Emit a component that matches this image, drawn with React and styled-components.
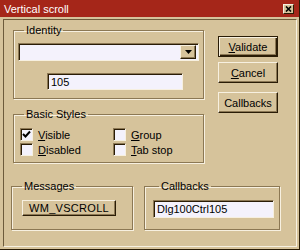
import React from "react";
import styled, { createGlobalStyle } from "styled-components";

const FACE = "#d6c39b";
const LIGHT = "#f7f0e0";
const SHADOW = "#8c7854";
const DARK = "#2a1c06";
const FIELD = "#f4f2fc";

const GlobalStyle = createGlobalStyle`
  html, body {
    margin: 0;
    padding: 0;
    background: ${FACE};
  }
  body {
    font-family: "Liberation Sans", Arial, sans-serif;
    font-size: 11px;
    color: #000;
  }
`;

const Window = styled.div`
  width: 300px;
  height: 250px;
  box-sizing: border-box;
  background: ${FACE};
  display: flex;
  flex-direction: column;
  border-right: 1px solid ${DARK};
  border-bottom: 1px solid ${DARK};
  overflow: hidden;
`;

const TitleBar = styled.div`
  height: 17px;
  flex: none;
  background: #a52619;
  color: #fff;
  display: flex;
  align-items: center;
  justify-content: space-between;
  padding: 0 5px 0 4px;
  font-size: 11px;
`;

const CloseBtn = styled.div`
  width: 11px;
  height: 10px;
  box-sizing: border-box;
  background: ${FACE};
  border: 1px solid;
  border-color: ${LIGHT} ${DARK} ${DARK} ${LIGHT};
  display: flex;
  align-items: center;
  justify-content: center;
`;

const Panel = styled.div`
  flex: 1;
  margin: 2px 2px 2px 3px;
  border: 1px solid;
  border-color: #6d5b3b ${LIGHT} ${LIGHT} #6d5b3b;
  display: flex;
  flex-direction: column;
`;

const TopRow = styled.div`
  display: flex;
  margin: 4px 0 0 9px;
`;

const LeftCol = styled.div`
  width: 191px;
  display: flex;
  flex-direction: column;
  gap: 9px;
`;

const BtnCol = styled.div`
  display: flex;
  flex-direction: column;
  margin: 12px 0 0 14px;
`;

const Group = styled.fieldset`
  margin: 0;
  width: ${(p) => p.$w}px;
  box-sizing: border-box;
  border: 1px solid ${SHADOW};
  box-shadow: inset 1px 1px 0 ${LIGHT}, 1px 1px 0 ${LIGHT};
  padding: ${(p) => p.$pad};
`;

const Legend = styled.legend`
  margin-left: 6px;
  padding: 0 2px;
  line-height: 13px;
  font-size: 11px;
`;

const Button = styled.div`
  width: 60px;
  height: 21px;
  box-sizing: border-box;
  margin-top: ${(p) => p.$mt || 0}px;
  display: flex;
  align-items: center;
  justify-content: center;
  font-size: 11px;
  border: 1px solid;
  border-color: ${(p) => (p.$default ? DARK : `${LIGHT} ${DARK} ${DARK} ${LIGHT}`)};
  box-shadow: ${(p) =>
    p.$default
      ? `inset 1px 1px 0 ${LIGHT}, inset -1px -1px 0 ${DARK}, inset -2px -2px 0 ${SHADOW}`
      : `inset -1px -1px 0 ${SHADOW}`};
  u {
    text-decoration: underline;
  }
`;

const SmallButton = styled(Button)`
  width: 94px;
  height: 16px;
  margin-left: 6px;
  letter-spacing: 0.3px;
`;

const Field = styled.div`
  box-sizing: border-box;
  width: ${(p) => p.$w}px;
  height: ${(p) => p.$h}px;
  margin-left: ${(p) => p.$ml || 0}px;
  background: ${FIELD};
  border: 1px solid;
  border-color: ${SHADOW} ${LIGHT} ${LIGHT} ${SHADOW};
  box-shadow: inset 1px 1px 0 ${DARK};
  display: flex;
  align-items: center;
  padding-left: 3px;
  font-size: 11px;
`;

const Combo = styled(Field)`
  justify-content: flex-end;
  padding: 0 2px 0 0;
  margin-top: 6px;
`;

const DropBtn = styled.div`
  width: 16px;
  height: 14px;
  box-sizing: border-box;
  background: ${FACE};
  border: 1px solid;
  border-color: ${LIGHT} ${DARK} ${DARK} ${LIGHT};
  box-shadow: inset -1px -1px 0 ${SHADOW};
  display: flex;
  align-items: center;
  justify-content: center;
`;

const Checks = styled.div`
  display: grid;
  grid-template-columns: 93px auto;
  row-gap: 2px;
  margin: 7px 0 1px 2px;
`;

const CheckRow = styled.div`
  display: flex;
  align-items: center;
  gap: 5px;
  height: 13px;
  font-size: 11px;
`;

const Box = styled.div`
  width: 13px;
  height: 13px;
  box-sizing: border-box;
  background: ${FIELD};
  border: 1px solid;
  border-color: ${SHADOW} ${LIGHT} ${LIGHT} ${SHADOW};
  box-shadow: inset 1px 1px 0 ${DARK};
  display: flex;
  align-items: center;
  justify-content: center;
`;

const BottomRow = styled.div`
  display: flex;
  gap: 11px;
  margin: 17px 0 0 7px;
`;

const Check = ({ label, hot, checked }) => (
  <CheckRow>
    <Box>
      {checked && (
        <svg width="9" height="9" viewBox="0 0 9 9">
          <path d="M1 4 L3.5 6.5 L8 1.5" stroke="#000" strokeWidth="2" fill="none" />
        </svg>
      )}
    </Box>
    <span>
      <u>{label.slice(0, hot)}</u>
      {label.slice(hot)}
    </span>
  </CheckRow>
);

const App = () => {
  return (
    <React.Fragment>
      <GlobalStyle />
      <Window>
        <TitleBar>
          <span>Vertical scroll</span>
          <CloseBtn>
            <svg width="7" height="6" viewBox="0 0 7 6">
              <path d="M1 0.5 L6 5.5 M6 0.5 L1 5.5" stroke="#000" strokeWidth="1.6" />
            </svg>
          </CloseBtn>
        </TitleBar>
        <Panel>
          <TopRow>
            <LeftCol>
              <Group $w={191} $pad="0 4px 8px 4px">
                <Legend>Identity</Legend>
                <Combo $w={181} $h={18}>
                  <DropBtn>
                    <svg width="7" height="4" viewBox="0 0 7 4">
                      <path d="M0 0 H7 L3.5 4 Z" fill="#000" />
                    </svg>
                  </DropBtn>
                </Combo>
                <Field $w={136} $h={17} $ml={29} style={{ marginTop: 12 }}>
                  105
                </Field>
              </Group>
              <Group $w={191} $pad="0 4px 5px 4px">
                <Legend>Basic Styles</Legend>
                <Checks>
                  <Check label="Visible" hot={1} checked />
                  <Check label="Group" hot={1} />
                  <Check label="Disabled" hot={1} />
                  <Check label="Tab stop" hot={1} />
                </Checks>
              </Group>
            </LeftCol>
            <BtnCol>
              <Button $default>
                <span>
                  <u>V</u>alidate
                </span>
              </Button>
              <Button $mt={5}>
                <span>
                  <u>C</u>ancel
                </span>
              </Button>
              <Button $mt={9}>Callbacks</Button>
            </BtnCol>
          </TopRow>
          <BottomRow>
            <Group $w={122} $pad="0 4px 13px 4px">
              <Legend>Messages</Legend>
              <SmallButton style={{ marginTop: 7 }}>WM_VSCROLL</SmallButton>
            </Group>
            <Group $w={136} $pad="0 4px 11px 8px">
              <Legend>Callbacks</Legend>
              <Field $w={121} $h={18} style={{ marginTop: 7 }}>
                Dlg100Ctrl105
              </Field>
            </Group>
          </BottomRow>
        </Panel>
      </Window>
    </React.Fragment>
  );
};

export default App;
